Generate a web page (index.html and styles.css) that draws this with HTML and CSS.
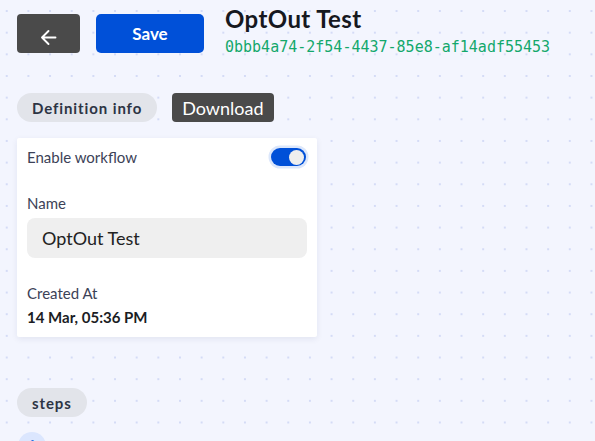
FILE: index.html
```html
<!DOCTYPE html>
<html>
<head>
<meta charset="utf-8">
<link rel="stylesheet" href="styles.css">
</head>
<body>
<div class="page">
  <div class="header">
    <button class="btn-back" aria-label="Back">
      <svg width="17" height="17" viewBox="0 0 17 17"><path d="M15.5 8.5H2M8.5 2L2 8.5l6.5 6.5" fill="none" stroke="#fff" stroke-width="1.9" stroke-linecap="round" stroke-linejoin="round"/></svg>
    </button>
    <button class="btn-save">Save</button>
    <div class="title-block">
      <div class="title">OptOut Test</div>
      <div class="uuid">0bbb4a74-2f54-4437-85e8-af14adf55453</div>
    </div>
  </div>

  <div class="tabs">
    <span class="pill">Definition info</span>
    <button class="btn-download">Download</button>
  </div>

  <div class="card">
    <div class="row-toggle">
      <span class="label">Enable workflow</span>
      <span class="toggle"><span class="knob"></span></span>
    </div>
    <div class="label name-label">Name</div>
    <div class="input">OptOut Test</div>
    <div class="label created-label">Created At</div>
    <div class="date">14 Mar, 05:36 PM</div>
  </div>

  <span class="pill steps">steps</span>
  <div class="step-node"><span class="step-num">1</span></div>
</div>
</body>
</html>
```
FILE: styles.css
```css
html, body {
  margin: 0;
  padding: 0;
  height: 100%;
  overflow: hidden;
}
body {
  background-color: #f3f5fe;
  background-image: radial-gradient(circle, #d4dbf6 1px, transparent 1.4px);
  background-size: 21.67px 21.67px;
  background-position: -4.1px 0.2px;
  font-family: Lato, "Noto Sans", sans-serif;
  color: #3c4257;
}
.page {
  padding: 14px 17px 0 17px;
}
.header {
  display: flex;
  align-items: flex-start;
  gap: 16px;
  height: 39px;
}
button {
  font-family: inherit;
  border: none;
  cursor: pointer;
}
.btn-back {
  width: 63px;
  height: 39px;
  background: #4a4a4a;
  border-radius: 4px;
  display: flex;
  align-items: center;
  justify-content: center;
  padding: 7px 0 0 0;
}
.btn-save {
  width: 108px;
  height: 39px;
  background: #0050d8;
  color: #fff;
  border-radius: 5px;
  font-size: 17px;
  font-weight: 700;
  padding: 0;
}
.title-block {
  margin-left: 5px;
  margin-top: -8px;
}
.title {
  font-size: 24px;
  font-weight: 700;
  letter-spacing: 0.4px;
  color: #16181f;
  line-height: 26px;
}
.uuid {
  font-family: "DejaVu Sans Mono", monospace;
  font-size: 15px;
  color: #14a86c;
  line-height: 18px;
  margin-top: 6px;
}
.tabs {
  display: flex;
  align-items: center;
  gap: 15px;
  margin-top: 40px;
}
.pill {
  display: inline-flex;
  align-items: center;
  height: 29px;
  padding: 0 15px;
  border-radius: 15px;
  background: #e2e4ea;
  font-size: 15px;
  font-weight: 700;
  letter-spacing: 0.9px;
  color: #2d3444;
}
.btn-download {
  height: 29px;
  padding: 0 10px;
  background: #4a4a4a;
  color: #fff;
  border-radius: 4px;
  font-size: 18px;
}
.card {
  margin-top: 16px;
  width: 280px;
  height: 190px;
  padding: 9px 10px 0 10px;
  background: #fff;
  border-radius: 2px;
  box-shadow: 0 2px 6px rgba(30, 40, 90, 0.08);
}
.row-toggle {
  display: flex;
  align-items: center;
  justify-content: space-between;
  height: 20px;
}
.label {
  font-size: 15px;
  line-height: 18px;
  color: #3c4257;
}
.toggle {
  width: 35px;
  height: 18px;
  border-radius: 9px;
  background: #0050d8;
  box-shadow: 0 0 0 2.5px #dce7fb;
  display: flex;
  align-items: center;
  justify-content: flex-end;
  padding: 0 2px;
  box-sizing: border-box;
  margin-right: 1px;
}
.knob {
  width: 15px;
  height: 15px;
  border-radius: 50%;
  background: #eeeeee;
}
.name-label {
  margin-top: 26.5px;
}
.input {
  margin-top: 6.5px;
  height: 40px;
  border-radius: 8px;
  background: #efefef;
  display: flex;
  align-items: center;
  padding-left: 15px;
  font-size: 18px;
  color: #222;
}
.created-label {
  margin-top: 25.5px;
}
.date {
  margin-top: 6.5px;
  font-size: 15px;
  line-height: 18px;
  font-weight: 700;
  color: #1b1d24;
}
.steps {
  margin-top: 51px;
}
.step-node {
  margin-top: 15px;
  margin-left: 1px;
  width: 28px;
  height: 28px;
  border-radius: 50%;
  background: #dbe6fe;
  display: flex;
  justify-content: center;
}
.step-num {
  margin-top: 5px;
  font-size: 14px;
  line-height: 16px;
  font-weight: 700;
  color: #2f6fe0;
}
```
